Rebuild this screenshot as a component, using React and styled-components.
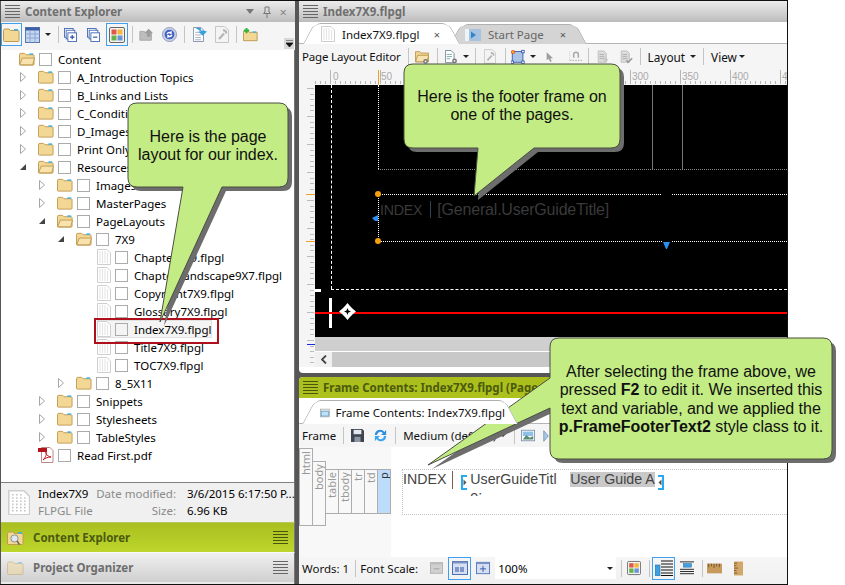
import React from "react";
import styled, { createGlobalStyle } from "styled-components";

const UI = `"Noto Sans", "Open Sans", sans-serif`;
const Global = createGlobalStyle`
  html, body { margin: 0; padding: 0; background: #fff; }
  body { font-family: ${UI}; font-size: 11.5px; color: #000; }
  * { box-sizing: border-box; }
`;

const Page = styled.div`position: relative; width: 845px; height: 585px; overflow: hidden; background: #fff;`;
const Frame = styled.div`display: flex; gap: 4px; width: 788px; height: 585px; background: #565656; border-top: 1px solid #111; border-bottom: 1px solid #111; border-right: 1px solid #111;`;
const LeftPane = styled.div`display: flex; flex-direction: column; width: 294px; margin-left: 1px; background: #fff; flex: none;`;
const RightCol = styled.div`display: flex; flex-direction: column; flex: 1; gap: 4px; min-width: 0;`;
const DocPane = styled.div`display: flex; flex-direction: column; height: 372px; background: #fff; border-radius: 0 0 0 4px; overflow: hidden;`;
const FramePane = styled.div`display: flex; flex-direction: column; flex: 1; background: #fff; border-radius: 4px 0 0 0; overflow: hidden;`;

const TitleBar = styled.div`
  display: flex; align-items: center; flex: none; height: 21px; padding: 0 8px 0 4px; gap: 5px;
  background: ${p => p.$lime ? "linear-gradient(#a9bd1c,#aec21e)" : "linear-gradient(#ececec,#bcbcbc)"};
  color: ${p => p.$lime ? "#4b5a0d" : "#6f6f6f"}; font-weight: 700; font-size: 11.5px; white-space: nowrap;
`;
const TitleText = styled.span`flex: 1; overflow: hidden;`;
const Burger = styled.span`
  flex: none; width: 15px; height: 13px;
  background: repeating-linear-gradient(${p => p.$c || "#666"} 0 1px, transparent 1px 3px);
`;
const Toolbar = styled.div`
  display: flex; align-items: center; flex: none; height: ${p => p.$h}px; background: #f5f5f5; padding: 0 0 ${p => p.$pb || 0}px ${p => p.$pl || 0}px; white-space: nowrap; position: relative;
`;
const Sep = styled.span`flex: none; width: 1px; height: 17px; background: #c4c4c4; margin: 0 ${p => p.$r}px 0 ${p => p.$l}px;`;
const Tool = styled.span`
  flex: none; display: flex; align-items: center; justify-content: center; width: ${p => p.$w}px; height: 23px;
  border: 1px solid ${p => p.$on ? "#3fa0f0" : "transparent"}; margin-left: ${p => p.$ml || 0}px;
`;
const Caret = styled.span`flex: none; width: 0; height: 0; margin: 0 ${p => p.$m}px; border: 3px solid transparent; border-top: 3px solid #222; border-bottom: 0;`;
const Grip = styled.span`
  position: absolute; right: 1px; bottom: 1px; width: 10px; height: 11px; background: #d8d8d8;
  display: flex; align-items: center; justify-content: center;
`;
const Label = styled.span`
  flex: none; color: #111; font-size: ${p => p.$fs || 11.5}px; letter-spacing: ${p => p.$ls || 0}px; margin-left: ${p => p.$ml || 0}px;
`;
const TitleIcons = styled.span`display: flex; align-items: center; gap: 9px; color: #888; font-size: 13px; font-weight: 400;`;

const Tree = styled.div`flex: 1; background: #fff; border-right: 1px solid #777; min-height: 0;`;
const Row = styled.div`display: flex; align-items: center; height: 18px; padding-left: ${p => p.$level * 19}px; white-space: nowrap; position: relative; z-index: 0;`;
const Exp = styled.span`flex: none; width: 18px; height: 18px; display: flex; align-items: center;`;
const Box = styled.span`flex: none; width: 13px; height: 13px; border: 1px solid #ababab; background: ${p => p.$sel ? "#f4f4f4" : "#fff"}; margin: 0 6px 0 4px;`;
const RowIconSlot = styled.span`flex: none; width: 16px; display: flex; align-items: center; padding-left: ${p => p.$doc ? 2 : 0}px;`;
const Highlight = styled.span`position: absolute; left: 96px; top: 0; width: 115px; height: 18px; background: #f4f4f4; border: 1px solid #e2e2e2; z-index: -1;`;
const RowText = styled.span``;
const RedBox = styled.div`position: absolute; left: 94px; top: 318px; width: 125px; height: 26px; border: 2px solid #b0101c;`;

const Info = styled.div`
  display: grid; grid-template-columns: 30px 55px 83px auto; grid-auto-rows: 17px; align-content: center; flex: none; height: 40px; background: #f0f0f0; border-top: 1px solid #7f7f7f; border-right: 1px solid #777; white-space: nowrap; font-size: 11.5px; padding-left: 7px;
`;
const InfoIcon = styled.span`grid-row: span 2; display: flex; align-items: center;`;
const Muted = styled.span`color: #8a8a8a; text-align: ${p => p.$r ? "right" : "left"};`;
const InfoVal = styled.span`padding-left: 11px;`;
const Band = styled.div`
  display: flex; align-items: center; gap: 9px; flex: none; height: 30px; padding: 0 6px 0 6px; font-weight: 700; font-size: 11.5px;
  background: ${p => p.$lime ? "linear-gradient(#a9bf20,#bdd62c)" : "linear-gradient(#f0f0f0,#cfcfcf)"};
  color: ${p => p.$lime ? "#4b5a10" : "#6d6d6d"}; border-right: 1px solid #777; border-top: 1px solid ${p => p.$lime ? "#b8c95c" : "#fafafa"};
`;
const BandIcon = styled.span`position: relative; flex: none; width: 17px; height: 14px; display: flex;`;
const Lens = styled.svg`position: absolute; left: 3px; top: 3px;`;
const BandText = styled.span`flex: 1;`;
const BandFoot = styled.div`flex: none; height: 2px; background: #e9e9e9; border-right: 1px solid #777;`;

const TabStrip = styled.div`display: flex; align-items: flex-end; flex: none; height: ${p => p.$h}px; background: #fff; border-bottom: 1px solid #b5b5b5; padding-left: 16px; position: relative;`;
const Tab = styled.div`
  position: relative; display: flex; align-items: center; gap: ${p => p.$gap || 7}px; height: ${p => p.$h || 21}px; width: ${p => p.$w}px; padding-left: ${p => p.$pl}px; flex: none; margin-bottom: -1px; margin-left: ${p => p.$ml || 0}px;
  background: ${p => p.$on ? "#fff" : "#d4d4d4"}; color: ${p => p.$on ? "#111" : "#666"}; z-index: ${p => p.$on ? 2 : 1};
  border-top: 1px solid #b0b0b0; border-radius: 6px 6px 0 0; white-space: nowrap; font-size: 11.5px;
  &::before, &::after { content: ""; position: absolute; top: 1px; bottom: 0; width: 14px; background: inherit; }
  &::before { left: -7px; transform: skewX(-28deg); border-left: 1px solid #b0b0b0; border-radius: 5px 0 0 0; z-index: -1; }
  &::after { right: -7px; transform: skewX(28deg); border-right: 1px solid #b0b0b0; border-radius: 0 5px 0 0; z-index: -1; }
`;
const TabX = styled.span`margin-left: auto; margin-right: ${p => p.$mr}px; color: #555; font-size: 11px;`;

const RulerRow = styled.div`display: flex; flex: none; height: 15px; background: #f5f5f5;`;
const Corner = styled.div`flex: none; width: 16px;`;
const TopRuler = styled.svg`display: block; flex: 1;`;
const Stage = styled.div`display: flex; flex: none; height: 282px; background: #f5f5f5;`;
const SideRuler = styled.svg`display: block; flex: none;`;
const StageMain = styled.div`display: flex; flex-direction: column; flex: 1;`;
const Canvas = styled.div`position: relative; flex: none; height: 252px; background: #000; overflow: hidden;`;
const Gutter = styled.div`flex: none; height: 15px; background: #cfcfcf; border-bottom: 1px solid #fff;`;
const HScroll = styled.div`display: flex; flex: 1; background: #c8c8c8;`;
const ScrollBtn = styled.span`flex: none; width: 17px; background: #f0f0f0; display: flex; align-items: center; justify-content: center;`;

const Line = styled.div`
  position: absolute; left: ${p => p.$x}px; top: ${p => p.$y}px; width: ${p => p.$w || 0}px; height: ${p => p.$h || 0}px;
  ${p => p.$w ? `border-top: 1px ${p.$s || "dotted"} ${p.$c || "#fff"};` : `border-left: 1px ${p.$s || "dotted"} ${p.$c || "#fff"};`}
`;
const Solid = styled.div`position: absolute; left: ${p => p.$x}px; top: ${p => p.$y}px; width: ${p => p.$w}px; height: ${p => p.$h}px; background: ${p => p.$c};`;
const Dot = styled.div`position: absolute; left: ${p => p.$x - 3}px; top: ${p => p.$y - 3}px; width: 6px; height: 6px; border-radius: 50%; background: #f5a00c;`;
const FooterText = styled.div`position: absolute; left: 65px; top: 116px; font: 16px "Liberation Sans", sans-serif; color: #3a3a3a; white-space: nowrap; letter-spacing: -.2px;`;
const FooterIndex = styled.span`font-size: 14.2px;`;
const FooterBar = styled.span`display: inline-block; width: 1px; height: 17px; background: #2a4458; margin: 0 6px 0 8px; vertical-align: -3px;`;
const Marker = styled.svg`position: absolute; left: ${p => p.$x}px; top: ${p => p.$y}px;`;

const Edit = styled.div`display: flex; flex: 1; background: #fff; min-height: 0;`;
const Crumbs = styled.div`display: flex; flex: none; width: 92px; background: #f8f8f8; height: 110px; align-items: flex-start;`;
const Crumb = styled.div`
  flex: none; width: 14px; height: ${p => p.$h}px; margin-top: ${p => p.$t}px; border: 1px solid #adadad; margin-left: ${p => p.$first ? 0 : -1}px;
  background: ${p => p.$on ? "#bcdcfa" : "#f8f8f8"}; color: ${p => p.$on ? "#333" : "#999"};
  writing-mode: vertical-rl; transform: rotate(180deg); text-align: right; font-size: 11px; line-height: 12px; padding-bottom: 2px; white-space: nowrap; overflow: hidden;
`;
const EditBody = styled.div`flex: 1; padding: 22px 0 0 11px;`;
const FooterFrame = styled.div`display: flex; align-items: flex-start; height: 46px; border: 1px dotted #c4c4c4; border-right: 0; font: 14.2px "Liberation Sans", sans-serif; color: #444; white-space: nowrap; padding-top: 1px;`;
const EBar = styled.span`flex: none; width: 1px; height: 18px; background: #7b5f4a; margin: 0 8px 0 6px;`;
const Clip = styled.span`flex: none; width: 101px; height: 25px; overflow: hidden; line-height: 17px; padding-left: 1px; white-space: pre-line;`;
const Gray = styled.span`flex: none; background: #c9c9c9; height: 15px; line-height: 15px; margin-top: 1px;`;
const Bracket = styled.svg`flex: none; margin: ${p => p.$m};`;
const Status = styled.div`display: flex; align-items: center; flex: none; height: 27px; background: linear-gradient(#f6f6f6,#f0f0f0); padding: 0 0 5px 3px; white-space: nowrap;`;
const ZoomField = styled.span`flex: none; display: flex; align-items: center; justify-content: space-between; width: 121px; height: 22px; background: #fff; margin-left: 4px; padding: 0 1px 0 3px;`;

const Callout = styled.div`
  position: absolute; left: ${p => p.$x}px; top: ${p => p.$y}px; width: ${p => p.$w}px; height: ${p => p.$h}px;
  display: flex; align-items: center; justify-content: center; text-align: center;
  font: 16px/18.3px "Liberation Sans", sans-serif; color: #111;
`;
const CalloutShape = styled.svg`position: absolute; left: 0; top: 0; overflow: visible;`;
const CalloutText = styled.div`position: relative; white-space: nowrap; letter-spacing: -.03px; top: ${p => p.$t || 0}px;`;

const FolderIcon = ({ open, faded }) => (
  <svg width="17" height="14" viewBox="0 0 17 14" style={{ opacity: faded ? .45 : 1 }}>
    <path d="M.5 2.5 Q.5 1 2 1 H6 L7.5 2.5 H15 Q16 2.5 16 3.5 V12.5 Q16 13.5 15 13.5 H1.5 Q.5 13.5 .5 12.5Z" fill="#f3d795" stroke="#c09a50" />
    {open && <path d="M.7 13 L3.5 6 H16.5 L14.5 13.2 H1Z" fill="#f8e2ad" stroke="#c09a50" />}
    <rect x="11" y="1" width="4" height="1.6" fill="#3fb0e0" />
  </svg>
);
const DocIcon = ({ s = 1 }) => (
  <svg width={14 * s} height={16 * s} viewBox="0 0 14 16">
    <path d="M.5.5H10L13.5 4V15.5H.5Z" fill="#fff" stroke="#cfcfcf" />
    <path d="M3 2.5V13.5M5.5 2.5V13.5M8 2.5V13.5M10.5 4.5V13.5" stroke="#c6c6c6" strokeDasharray="1 1" />
  </svg>
);
const PdfIcon = () => (
  <svg width="16" height="16" viewBox="0 0 16 16">
    <path d="M3.5.5H12L15 3.5V15.5H3.5Z" fill="#fff" stroke="#b88" />
    <rect x="0" y="1" width="9" height="4" fill="#b3141d" />
    <path d="M5 13 C8 10 9 6 8 5 C7 5 8 9 13 10 C10 10 7 11 5 13Z" fill="none" stroke="#c3141d" />
  </svg>
);
const Collapsed = () => <svg width="6" height="10" viewBox="0 0 6 10"><path d="M.5.5 5.5 5 .5 9.5Z" fill="#fff" stroke="#a6a6a6" /></svg>;
const Expanded = () => <svg width="6" height="6" viewBox="0 0 6 6"><path d="M6 0V6H0Z" fill="#444" /></svg>;

const Panes = ({ sign }) => (
  <svg width="15" height="16" viewBox="0 0 15 16">
    <rect x=".5" y=".5" width="10" height="10" fill="#fff" stroke="#3b63b0" />
    <rect x="2.5" y="2.5" width="10" height="10" fill="#fff" stroke="#3b63b0" />
    <rect x="4.5" y="5.5" width="10" height="10" fill="#fff" stroke="#3b63b0" />
    <path d={sign === "+" ? "M7 10.5H12M9.5 8V13" : "M7 10.5H12"} stroke="#2a4f9e" strokeWidth="1.3" />
  </svg>
);
const Palette = () => (
  <svg width="16" height="16" viewBox="0 0 16 16">
    <rect x=".5" y=".5" width="15" height="15" rx="1.5" fill="#f3f3f3" stroke="#666" />
    <rect x="2.5" y="2.5" width="5" height="5" fill="#e2574c" /><rect x="8.5" y="2.5" width="5" height="5" fill="#f4b73c" />
    <rect x="2.5" y="8.5" width="5" height="5" fill="#67b34a" /><rect x="8.5" y="8.5" width="5" height="5" fill="#6b93d6" />
  </svg>
);
const TableIcon = () => (
  <svg width="15" height="16" viewBox="0 0 15 16">
    <rect x=".5" y=".5" width="14" height="15" fill="#c5d6ef" stroke="#5a78b0" />
    <rect x=".5" y=".5" width="14" height="3" fill="#3d5fa3" />
    <path d="M.5 7H14.5M.5 11H14.5M5 3.5V15.5M10 3.5V15.5" stroke="#8ba6d6" />
  </svg>
);
const GrayFolderArrow = () => (
  <svg width="17" height="15" viewBox="0 0 17 15"><path d="M1 4H6L7 5H14V14H1Z" fill="#bdbdbd" stroke="#a5a5a5" /><path d="M11 1 16 6H13V10H9V6H6Z" fill="#9c9c9c" /></svg>
);
const BlueCircle = () => (
  <svg width="17" height="17" viewBox="0 0 17 17">
    <circle cx="8.5" cy="8.5" r="8" fill="#c9cfe6" stroke="#8d95b5" />
    <circle cx="8.5" cy="8.5" r="5.5" fill="#3f62c0" />
    <path d="M5 8 Q6 5 9 5.4 L11 4.5 V8 H8 L9.5 7 Q7.5 6.5 6.5 8.5ZM12 9 Q11 12 8 11.6 L6 12.5 V9 H9 L7.5 10 Q9.5 10.5 10.5 8.5Z" fill="#fff" />
  </svg>
);
const DocBlue = () => (
  <svg width="16" height="17" viewBox="0 0 16 17">
    <path d="M.5.5H9L12 3.5V16.5H.5Z" fill="#fff" stroke="#7b8da5" />
    <path d="M2.5 6H9M2.5 9H9M2.5 12H9M2.5 14.5H9" stroke="#9aa8b8" />
    <path d="M3 1H9V4H12 L16 5 11 10 6 5H9Z" fill="#3aa0dc" />
  </svg>
);
const WrenchDoc = ({ faded }) => (
  <svg width="14" height="17" viewBox="0 0 14 17" style={{ opacity: faded ? .6 : 1 }}>
    <path d="M.5.5H9.5L13.5 4V16.5H.5Z" fill="#f4f4f4" stroke="#a8a8a8" />
    <path d="M4 13 9 7.5M8 4.5a2.4 2.4 0 0 1 3 3" stroke="#8c8c8c" strokeWidth="2.2" fill="none" />
  </svg>
);
const FolderPlus = () => (
  <svg width="17" height="15" viewBox="0 0 17 15">
    <path d="M.5 4H6L7 5H16V14.5H.5Z" fill="#f3d795" stroke="#b8934c" />
    <path d="M4 0V6M1 3H7" stroke="#2fb33a" strokeWidth="2.2" />
    <rect x="11" y="4" width="4" height="1.4" fill="#3fb0e0" />
  </svg>
);
const GearFolder = () => (
  <svg width="16" height="16" viewBox="0 0 16 16">
    <path d="M.5 2H5.5L7 3.5H15.5V13.5H.5Z" fill="#f3d795" stroke="#b8934c" />
    <path d="M.7 13.5 3 6H15.8L13.5 13.5Z" fill="#f8e2ad" stroke="#b8934c" />
    <circle cx="12" cy="13" r="2.6" fill="#777" /><circle cx="12" cy="13" r="1" fill="#fff" />
  </svg>
);
const DocGear = () => (
  <svg width="15" height="16" viewBox="0 0 15 16">
    <path d="M.5.5H7L10.5 4V14.5H.5Z" fill="#fff" stroke="#6f7f8c" />
    <path d="M2 5H8M2 7.5H8M2 10H6" stroke="#6aa5a0" />
    <circle cx="11" cy="12.5" r="2.8" fill="#777" /><circle cx="11" cy="12.5" r="1" fill="#fff" />
  </svg>
);
const FrameTool = () => (
  <svg width="17" height="17" viewBox="0 0 17 17">
    <rect x="1.5" y="2.5" width="13" height="13" fill="#a9c4e4" stroke="#2b4fa8" />
    <rect x="13" y="1" width="3" height="3" fill="#fff" stroke="#2b4fa8" /><rect x="13" y="14" width="3" height="3" fill="#fff" stroke="#2b4fa8" /><rect x="0" y="14" width="3" height="3" fill="#fff" stroke="#2b4fa8" />
    <circle cx="2.5" cy="3" r="2.5" fill="#e8551e" /><circle cx="2.5" cy="3" r="1.1" fill="#fc3" />
  </svg>
);
const Pointer = () => <svg width="11" height="16" viewBox="0 0 12 16"><path d="M1 1V13L4 10.5 6.5 15.5 8.5 14.5 6.5 10H10.5Z" fill="#9d9d9d" /></svg>;
const Magnet = () => (
  <svg width="16" height="15" viewBox="0 0 18 15">
    <path d="M5 9V5a4 4 0 0 1 8 0V9H11V5a2 2 0 0 0-4 0V9Z" fill="#a9a9a9" />
    <path d="M1 12.5H17" stroke="#9a9a9a" strokeDasharray="2 1.5" /><path d="M1 1V12" stroke="#b5b5b5" strokeDasharray="1 1.5" />
  </svg>
);
const DocCheck = ({ check }) => (
  <svg width="16" height="16" viewBox="0 0 16 16">
    <path d="M1.5.5H8.5L11.5 3.5V14.5H1.5Z" fill="#dcdcdc" stroke="#bbb" />
    <path d="M3 5H9M3 7.5H9M3 10H9" stroke="#aaa" />
    {check ? <path d="M8 12 10 14.5 15 9.5" stroke="#9b9b9b" strokeWidth="2" fill="none" /> : <path d="M9 8 14 11.5 9 15Z" fill="#c6c6c6" />}
  </svg>
);
const FrameTabIcon = () => (
  <svg width="16" height="14" viewBox="0 0 16 14"><rect x=".5" y=".5" width="15" height="13" fill="#e8e8e8" stroke="#9a9a9a" /><rect x="2" y="4" width="12" height="8" fill="#bfe3f6" stroke="#4a8cc0" /></svg>
);
const StartIcon = () => (
  <svg width="16" height="12" viewBox="0 0 16 12"><rect width="16" height="12" fill="#a7c3df" /><rect x="0" y="0" width="4" height="12" fill="#eef3f8" /><path d="M6 2.5 11 6 6 9.5Z" fill="#2e86c9" /></svg>
);
const Save = () => (
  <svg width="15" height="15" viewBox="0 0 15 15"><path d="M0 0H13L15 2V15H0Z" fill="#3e4552" /><rect x="3" y="1" width="9" height="5" fill="#e4e8ee" /><rect x="4" y="9" width="7" height="6" fill="#8f96a3" /></svg>
);
const Refresh = () => (
  <svg width="15" height="15" viewBox="0 0 15 15">
    <path d="M1 7 A6 6 0 0 1 12 3.5 L14 1 V7 H8 L10.3 5 A3.6 3.6 0 0 0 3.6 7Z" fill="#2d8fe0" />
    <path d="M14 8 A6 6 0 0 1 3 11.5 L1 14 V8 H7 L4.7 10 A3.6 3.6 0 0 0 11.4 8Z" fill="#3aa3ee" />
  </svg>
);
const Picture = () => (
  <svg width="16" height="13" viewBox="0 0 16 13"><rect x=".5" y=".5" width="15" height="12" fill="#fff" stroke="#7f8ea6" /><rect x="2" y="2" width="12" height="5" fill="#8fc0e6" /><path d="M2 11 6 6 10 9 14 7V11Z" fill="#5a8c7a" /></svg>
);
const NextPic = () => <svg width="8" height="16" viewBox="0 0 8 16"><path d="M1 1 7 8 1 15Z" fill="#a5c9e6" stroke="#6a8bb0" /></svg>;
const ScaleBtn = ({ kind }) => (
  <svg width="16" height="14" viewBox="0 0 16 14">
    <rect x=".5" y=".5" width="15" height="13" fill={kind === "-" ? "#d0d0d0" : "#d6e0f2"} stroke={kind === "-" ? "#aaa" : "#4b6fb8"} />
    <rect x=".5" y=".5" width="15" height="2" fill={kind === "-" ? "#bbb" : "#7c93c2"} />
    {kind === "-" && <path d="M4.5 8H11.5" stroke="#999" />}
    {kind === "+" && <path d="M4.5 8H11.5M8 4.5V11.5" stroke="#2c4f9f" />}
    {kind === "100" && <path d="M4 6V11M6 6V11M9 6V11M11 6V11" stroke="#2c4f9f" />}
  </svg>
);
const ListLeft = () => (
  <svg width="18" height="16" viewBox="0 0 18 16"><rect x="0" y="5" width="5" height="11" fill="#3fa0e0" stroke="#1e6ea8" strokeWidth=".6" /><path d="M6 1H18M6 4H18M6 7H18M6 10H18M6 13H18M6 15.5H18" stroke="#111" /></svg>
);
const ListTop = () => (
  <svg width="16" height="16" viewBox="0 0 16 16"><path d="M0 1H16M0 9.5H16M0 12H16M0 14.5H16" stroke="#111" /><rect x="4" y="3" width="9" height="4" fill="#3fa0e0" stroke="#1e6ea8" strokeWidth=".6" /></svg>
);
const RulerH = () => (
  <svg width="17" height="11" viewBox="0 0 17 11"><rect width="17" height="11" fill="#c69a5c" /><path d="M2 0V4M5 0V3M8 0V5M11 0V3M14 0V4" stroke="#6e4f22" /></svg>
);
const RulerV = () => (
  <svg width="11" height="17" viewBox="0 0 11 17"><rect width="11" height="17" fill="#d2a769" /><path d="M0 2H4M0 5H3M0 8H5M0 11H3M0 14H4" stroke="#6e4f22" /></svg>
);

const Ruler = () => {
  const ticks = [];
  for (let x = 0; x < 473; x += 5) {
    const major = x % 50 === 15;
    ticks.push(<path key={x} d={`M${x + .5} ${major ? 0 : 11}V14`} stroke="#b5b5b5" />);
  }
  const labels = [["0", 18], ["50", 66], ["300", 317], ["350", 367], ["400", 417], ["4", 467]];
  return (
    <TopRuler width="472" height="15">
      {ticks}
      {labels.map(([t, x]) => <text key={t} x={x} y="10" fontSize="10" fill="#aaa" fontFamily="Liberation Sans">{t}</text>)}
      <path d="M63.5 0V15" stroke="#f0a020" />
    </TopRuler>
  );
};
const VRuler = () => {
  const t = [];
  for (let y = 3; y < 282; y += 5.6) {
    const long = Math.round((y - 3) / 5.6) % 5 === 0;
    t.push(<path key={y} d={`M${long ? 8 : 11} ${Math.round(y) + .5}H15`} stroke="#bcbcbc" />);
  }
  return (
    <SideRuler width="16" height="282">
      {t}
      <path d="M7 109.5H16M7 156.5H16" stroke="#f0a020" />
      <path d="M8 259.5H16" stroke="#1c2be0" />
    </SideRuler>
  );
};

const Shape = ({ w, h, d, r = 4 }) => (
  <CalloutShape width={w} height={h}>
    <path d={d} transform={`translate(${r} ${r})`} fill="#6d6d6d" />
    <path d={d} fill="#c3ec84" stroke="#4a4f40" strokeWidth="1" />
  </CalloutShape>
);
const bottomTail = (w, h, b1, b2, tx, ty, r = 9) =>
  `M${r} 0H${w - r}Q${w} 0 ${w} ${r}V${h - r}Q${w} ${h} ${w - r} ${h}H${b2}L${tx} ${ty}L${b1} ${h}H${r}Q0 ${h} 0 ${h - r}V${r}Q0 0 ${r} 0Z`;
const leftTail = (w, h, b1, b2, tx, ty, r = 9) =>
  `M${r} 0H${w - r}Q${w} 0 ${w} ${r}V${h - r}Q${w} ${h} ${w - r} ${h}H${r}Q0 ${h} 0 ${h - r}V${b2}L${tx} ${ty}L0 ${b1}V${r}Q0 0 ${r} 0Z`;

const tree = [
  [0, "open", "Content", "none"],
  [1, "folder", "A_Introduction Topics", "c"],
  [1, "folder", "B_Links and Lists", "c"],
  [1, "folder", "C_Conditional Text", "c"],
  [1, "folder", "D_Images", "c"],
  [1, "folder", "Print Only", "c"],
  [1, "open", "Resources", "e"],
  [2, "folder", "Images", "c"],
  [2, "folder", "MasterPages", "c"],
  [2, "open", "PageLayouts", "e"],
  [3, "open", "7X9", "e"],
  [4, "doc", "Chapter7X9.flpgl"],
  [4, "doc", "ChapterLandscape9X7.flpgl"],
  [4, "doc", "Copyright7X9.flpgl"],
  [4, "doc", "Glossary7X9.flpgl"],
  [4, "doc", "Index7X9.flpgl", "sel"],
  [4, "doc", "Title7X9.flpgl"],
  [4, "doc", "TOC7X9.flpgl"],
  [3, "folder", "8_5X11", "c"],
  [2, "folder", "Snippets", "c"],
  [2, "folder", "Stylesheets", "c"],
  [2, "folder", "TableStyles", "c"],
  [1, "pdf", "Read First.pdf", "none"],
];

export default function App() {
  return (
    <Page>
      <Global />
      <Frame>
        <LeftPane>
          <TitleBar>
            <Burger />
            <TitleText>Content Explorer</TitleText>
            <TitleIcons>
              <svg width="8" height="5" viewBox="0 0 8 5"><path d="M0 0H8L4 5Z" fill="#777" /></svg>
              <svg width="8" height="12" viewBox="0 0 8 12"><path d="M2 1H6V6L7.5 7.5H.5L2 6ZM4 7.5V12" fill="none" stroke="#777" /></svg>
              <span>×</span>
            </TitleIcons>
          </TitleBar>
          <Toolbar $h={28} $pb={3}>
            <Tool $w={21} $on><FolderIcon /></Tool>
            <Tool $w={21}><TableIcon /></Tool>
            <Caret $m={2} />
            <Sep $l={5} $r={4} />
            <Tool $w={15}><Panes sign="+" /></Tool>
            <Tool $w={15} $ml={8}><Panes sign="-" /></Tool>
            <Tool $w={22} $ml={5} $on><Palette /></Tool>
            <Sep $l={4} $r={5} />
            <Tool $w={17}><GrayFolderArrow /></Tool>
            <Tool $w={17} $ml={6}><BlueCircle /></Tool>
            <Sep $l={6} $r={7} />
            <Tool $w={16}><DocBlue /></Tool>
            <Tool $w={16} $ml={6}><WrenchDoc faded /></Tool>
            <Sep $l={6} $r={5} />
            <Tool $w={17}><FolderPlus /></Tool>
            <Grip><svg width="7" height="7" viewBox="0 0 7 7"><path d="M0 0H7M0 3H7L3.5 7Z" stroke="#111" fill="#111" strokeWidth=".8" /></svg></Grip>
          </Toolbar>
          <Tree>
            {tree.map(([level, kind, text, st], i) => (
              <Row key={i} $level={level}>
                {st === "sel" && <Highlight />}
                <Exp>{st === "c" && <Collapsed />}{st === "e" && <Expanded />}</Exp>
                <RowIconSlot $doc={kind === "doc"}>
                  {kind === "folder" && <FolderIcon />}
                  {kind === "open" && <FolderIcon open />}
                  {kind === "doc" && <DocIcon />}
                  {kind === "pdf" && <PdfIcon />}
                </RowIconSlot>
                <Box $sel={st === "sel"} />
                <RowText>{text}</RowText>
              </Row>
            ))}
          </Tree>
          <Info>
            <InfoIcon><DocIcon s={1.6} /></InfoIcon>
            <span>Index7X9</span>
            <Muted $r>Date modified:</Muted>
            <InfoVal>3/6/2015 6:17:50 P...</InfoVal>
            <Muted>FLPGL File</Muted>
            <Muted $r>Size:</Muted>
            <InfoVal>6.96 KB</InfoVal>
          </Info>
          <Band $lime>
            <BandIcon>
              <FolderIcon />
              <Lens width="10" height="11" viewBox="0 0 10 11"><circle cx="4.5" cy="4.5" r="3.6" fill="#dfe8ee" stroke="#8a949c" /><path d="M7 7 9.5 10.5" stroke="#666" strokeWidth="1.5" /></Lens>
            </BandIcon>
            <BandText>Content Explorer</BandText>
            <Burger $c="#4a5510" />
          </Band>
          <Band>
            <BandIcon><FolderIcon faded /></BandIcon>
            <BandText>Project Organizer</BandText>
            <Burger />
          </Band>
          <BandFoot />
        </LeftPane>
        <RightCol>
          <DocPane>
            <TitleBar>
              <Burger />
              <TitleText>Index7X9.flpgl</TitleText>
            </TitleBar>
            <TabStrip $h={22}>
              <Tab $on $w={133} $pl={6}><DocIcon /><span>Index7X9.flpgl</span><TabX $mr={8}>×</TabX></Tab>
              <Tab $w={113} $pl={3} $h={20} $ml={14}><StartIcon /><span>Start Page</span><TabX $mr={9}>×</TabX></Tab>
            </TabStrip>
            <Toolbar $h={26} $pl={3} $pb={1}>
              <Label $ls={-.18}>Page Layout Editor</Label>
              <Sep $l={7} $r={5} />
              <Tool $w={16}><GearFolder /></Tool>
              <Sep $l={7} $r={6} />
              <Tool $w={15}><DocGear /></Tool>
              <Caret $m={4} />
              <Sep $l={2} $r={7} />
              <Tool $w={14}><WrenchDoc faded /></Tool>
              <Sep $l={8} $r={4} />
              <Tool $w={16}><FrameTool /></Tool>
              <Caret $m={4} />
              <Tool $w={10} $ml={5}><Pointer /></Tool>
              <Tool $w={16} $ml={13}><Magnet /></Tool>
              <Sep $l={4} $r={7} />
              <Tool $w={15}><DocCheck /></Tool>
              <Tool $w={15} $ml={8}><DocCheck check /></Tool>
              <Sep $l={6} $r={7} />
              <Label $fs={11.8}>Layout</Label>
              <Caret $m={5} />
              <Sep $l={2} $r={7} />
              <Label $fs={11.8}>View</Label>
              <Caret $m={2} />
            </Toolbar>
            <RulerRow><Corner /><Ruler /></RulerRow>
            <Stage>
              <VRuler />
              <StageMain>
                <Canvas>
                  <Line $x={16} $y={0} $h={204} $s="dashed" />
                  <Line $x={63} $y={0} $h={84} />
                  <Line $x={16} $y={204} $w={456} $s="dashed" />
                  <Line $x={63} $y={84} $w={409} $c="#888" />
                  <Solid $x={337} $y={0} $w={1} $h={84} $c="#777" />
                  <Solid $x={367} $y={0} $w={1} $h={84} $c="#777" />
                  <Line $x={63} $y={109} $w={283} />
                  <Line $x={357} $y={109} $w={115} />
                  <Line $x={63} $y={156} $w={284} />
                  <Line $x={357} $y={156} $w={115} />
                  <Line $x={63} $y={109} $h={47} />
                  <Dot $x={63} $y={109} />
                  <Dot $x={63} $y={156} />
                  <FooterText><FooterIndex>INDEX</FooterIndex><FooterBar />[General.UserGuideTitle]</FooterText>
                  <Marker $x={57} $y={130} width="6" height="6" viewBox="0 0 6 6"><path d="M6 0V6H3L0 3 3 1.5Z" fill="#2a8ff0" /></Marker>
                  <Marker $x={348} $y={157} width="7" height="7" viewBox="0 0 7 7"><path d="M0 0H7L4 7H3Z" fill="#2a8ff0" /></Marker>
                  <Solid $x={0} $y={204} $w={6} $h={3} $c="#fff" />
                  <Solid $x={14} $y={213} $w={3} $h={30} $c="#fff" />
                  <Solid $x={0} $y={227} $w={472} $h={2} $c="#f00" />
                  <Marker $x={24} $y={218} width="17" height="17" viewBox="0 0 17 17">
                    <path d="M8.5 0 11 3 14 6 17 8.5 14 11 11 14 8.5 17 6 14 3 11 0 8.5 3 6 6 3Z" fill="#fff" />
                    <path d="M8.5 5 9.5 7.5 12 8.5 9.5 9.5 8.5 12 7.5 9.5 5 8.5 7.5 7.5Z" fill="#000" />
                  </Marker>
                </Canvas>
                <Gutter />
                <HScroll>
                  <ScrollBtn><svg width="6" height="9" viewBox="0 0 6 9"><path d="M5 .5 1 4.5 5 8.5" fill="none" stroke="#444" strokeWidth="1.8" /></svg></ScrollBtn>
                </HScroll>
              </StageMain>
            </Stage>
          </DocPane>
          <FramePane>
            <TitleBar $lime>
              <Burger $c="#4a5510" />
              <TitleText>Frame Contents: Index7X9.flpgl (Page</TitleText>
            </TitleBar>
            <TabStrip $h={26}>
              <Tab $on $w={190} $h={24} $pl={5} $gap={6}><FrameTabIcon /><span>Frame Contents: Index7X9.flpgl</span></Tab>
            </TabStrip>
            <Toolbar $h={23} $pl={3}>
              <Label>Frame</Label>
              <Sep $l={7} $r={6} />
              <Tool $w={15}><Save /></Tool>
              <Tool $w={15} $ml={8}><Refresh /></Tool>
              <Sep $l={7} $r={7} />
              <Label>Medium (default)</Label>
              <Caret $m={4} />
              <Sep $l={4} $r={5} />
              <Tool $w={16}><Picture /></Tool>
              <Tool $w={8} $ml={6}><NextPic /></Tool>
            </Toolbar>
            <Edit>
              <Crumbs>
                <Crumb $first $h={78} $t={1}>html</Crumb>
                <Crumb $h={65} $t={14}>body</Crumb>
                <Crumb $h={45} $t={22}>table</Crumb>
                <Crumb $h={45} $t={22}>tbody</Crumb>
                <Crumb $h={45} $t={22}>tr</Crumb>
                <Crumb $h={45} $t={22}>td</Crumb>
                <Crumb $h={45} $t={22} $on>p</Crumb>
              </Crumbs>
              <EditBody>
                <FooterFrame>
                  <span>INDEX</span>
                  <EBar />
                  <Bracket $m="4px 2px 0 0" width="6" height="15" viewBox="0 0 6 15"><path d="M6 1H1V14H6" fill="none" stroke="#2aa8f0" strokeWidth="2" /><path d="M2.5 4.5 5.5 7.5 2.5 10.5Z" fill="#555" /></Bracket>
                  <Clip>{"UserGuideTitl\ne:"}</Clip>
                  <Gray>User Guide A</Gray>
                  <Bracket $m="4px 0 0 3px" width="6" height="15" viewBox="0 0 6 15"><path d="M0 1H5V14H0" fill="none" stroke="#2aa8f0" strokeWidth="2" /><path d="M3.5 4.5 .5 7.5 3.5 10.5Z" fill="#555" /></Bracket>
                </FooterFrame>
              </EditBody>
            </Edit>
            <Status>
              <Label>Words: 1</Label>
              <Sep $l={6} $r={4} />
              <Label>Font Scale:</Label>
              <Tool $w={15} $ml={11}><ScaleBtn kind="-" /></Tool>
              <Tool $w={23} $ml={4} $on><ScaleBtn kind="100" /></Tool>
              <Tool $w={16} $ml={4}><ScaleBtn kind="+" /></Tool>
              <ZoomField>100%<Caret $m={2} /></ZoomField>
              <Sep $l={5} $r={4} />
              <Tool $w={16}><Palette /></Tool>
              <Sep $l={7} $r={2} />
              <Tool $w={23} $on><ListLeft /></Tool>
              <Tool $w={16} $ml={4}><ListTop /></Tool>
              <Sep $l={7} $r={3} />
              <Tool $w={17}><RulerH /></Tool>
              <Tool $w={11} $ml={10}><RulerV /></Tool>
            </Status>
          </FramePane>
        </RightCol>
      </Frame>
      <RedBox />
      <Callout $x={128} $y={103} $w={160} $h={84}>
        <Shape w={160} h={84} d={bottomTail(160, 84, 55, 94, 32, 219)} />
        <CalloutText $t={1}>Here is the page<br />layout for our index.</CalloutText>
      </Callout>
      <Callout $x={404} $y={64} $w={216} $h={84}>
        <Shape w={216} h={84} d={bottomTail(216, 84, 74, 130, 70, 132)} />
        <CalloutText>Here is the footer frame on<br />one of the pages.</CalloutText>
      </Callout>
      <Callout $x={550} $y={338} $w={282} $h={121}>
        <Shape w={282} h={121} d={leftTail(282, 121, 40, 70, -122, 127)} />
        <CalloutText $t={1}>After selecting the frame above, we<br />pressed <b>F2</b> to edit it. We inserted this<br />text and variable, and we applied the<br /><b>p.FrameFooterText2</b> style class to it.</CalloutText>
      </Callout>
    </Page>
  );
}
